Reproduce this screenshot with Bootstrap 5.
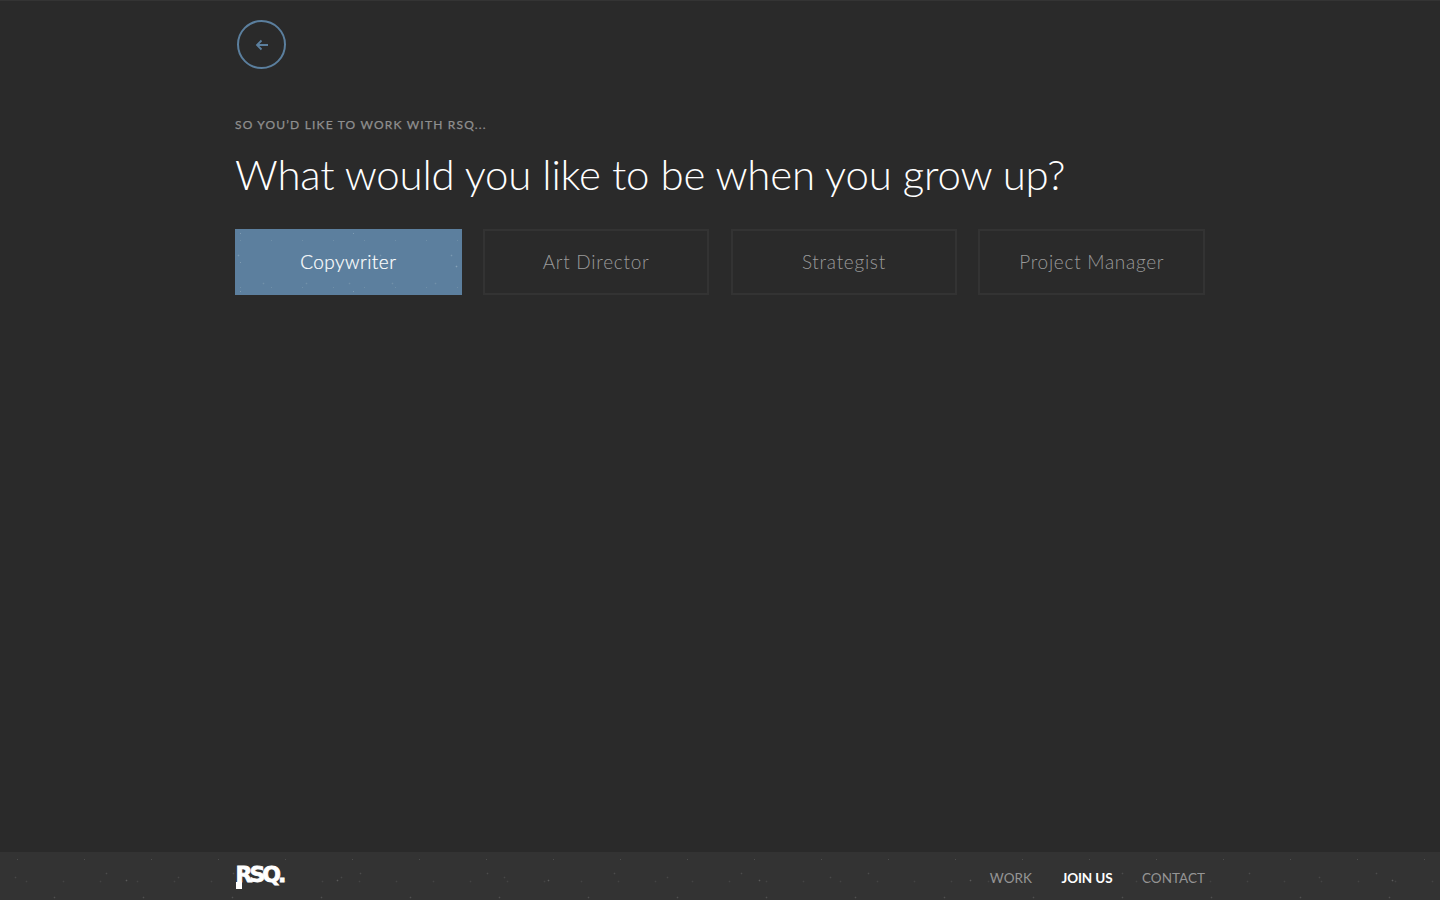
<!DOCTYPE html>
<html lang="en">
<head>
<meta charset="utf-8">
<title>RSQ</title>
<link href="https://cdn.jsdelivr.net/npm/bootstrap@5.3.0/dist/css/bootstrap.min.css" rel="stylesheet">
<style>
html,body{height:100%}
body{background:#2a2a2a;font-family:"Lato","Liberation Sans",sans-serif;color:#fff;border-top:1px solid #343434}
.page-shell{min-height:calc(100vh - 1px)}
.page-wrap{width:970px;margin:0 auto}
.back-ring{width:49px;height:49px;margin-top:19px;margin-left:2px;border:2px solid #5b7f9e;border-radius:50%}
.eyebrow{margin-top:47px;font-size:12px;line-height:18px;font-weight:400;letter-spacing:1.19px;color:#8f8f8f;-webkit-text-stroke:.25px #8f8f8f}
.headline{margin:10px 0 0;font-size:42px;line-height:60px;font-weight:300;letter-spacing:-.2px;color:#fff}
.role-grid{display:grid;grid-template-columns:repeat(4,1fr);column-gap:21.33px;margin-top:25px}
.role-btn{height:66px;border:2px solid #333;border-radius:0;background:transparent;color:#9a9a9a;font-size:19px;font-weight:300;letter-spacing:.72px;padding:0}
.role-btn:hover{color:#9a9a9a;border-color:#333}
.role-active,.role-active:hover{color:#fff;letter-spacing:.45px;-webkit-text-stroke:.2px #fff;border-color:#5c7f9e;background-color:#5c7f9e;
background-image:radial-gradient(circle,#86a2b8 .7px,transparent 1.1px),radial-gradient(circle,#7a98b0 .7px,transparent 1.1px),radial-gradient(circle,#7190a9 .7px,transparent 1.1px),radial-gradient(circle,#7e9bb2 .6px,transparent 1px),radial-gradient(circle,#6f8fa8 .6px,transparent 1px);background-size:137px 53px,71px 41px,43px 61px,113px 29px,31px 47px;background-position:14px 9px,37px 4px,5px 22px,60px 17px,19px 33px}
.site-foot{height:48px;background-color:#333;
background-image:radial-gradient(circle,#5a5a5a .7px,transparent 1.1px),radial-gradient(circle,#4c4c4c .7px,transparent 1.1px),radial-gradient(circle,#505050 .7px,transparent 1.1px),radial-gradient(circle,#484848 .7px,transparent 1.1px),radial-gradient(circle,#4e4e4e .6px,transparent 1px),radial-gradient(circle,#444 .7px,transparent 1.1px);background-size:211px 43px,127px 37px,89px 53px,163px 29px,67px 47px,37px 31px;background-position:21px 7px,43px 3px,10px 19px,97px 11px,51px 31px,8px 14px}
.foot-logo{position:relative;font-family:"DejaVu Sans","Liberation Sans",sans-serif;font-weight:700;font-size:22px;letter-spacing:-3px;line-height:48px;color:#fff;-webkit-text-stroke:.8px #fff;margin-top:-2px;margin-left:.5px}
.logo-stem{position:absolute;left:0;top:31px;width:6px;height:7px;background:#fff}
.foot-link{font-size:13.5px;font-weight:400;color:#959595;text-decoration:none;line-height:18px;letter-spacing:.03px}
.foot-link.is-current{color:#fff;font-weight:700;letter-spacing:-.12px}
.foot-nav{gap:29.5px;padding-top:4px}
</style>
</head>
<body>
<div class="page-shell d-flex flex-column">
  <main class="flex-grow-1">
    <div class="page-wrap">
      <a href="#" class="back-ring d-flex align-items-center justify-content-center" aria-label="Back">
        <svg width="14" height="12" viewBox="0 0 14 12" fill="none" stroke="#5b7f9e" stroke-width="1.8"><path d="M13 6H2M6.500 1.500 2 6l4.500 4.500"/></svg>
      </a>
      <div class="eyebrow">SO YOU’D LIKE TO WORK WITH RSQ...</div>
      <h1 class="headline">What would you like to be when you grow up?</h1>
      <div class="role-grid">
        <button class="btn role-btn role-active">Copywriter</button>
        <button class="btn role-btn">Art Director</button>
        <button class="btn role-btn">Strategist</button>
        <button class="btn role-btn">Project Manager</button>
      </div>
    </div>
  </main>
  <footer class="site-foot">
    <div class="page-wrap d-flex justify-content-between align-items-center h-100">
      <div class="foot-logo">RSQ.<span class="logo-stem"></span></div>
      <nav class="foot-nav d-flex align-items-center">
        <a class="foot-link" href="#">WORK</a>
        <a class="foot-link is-current" href="#">JOIN US</a>
        <a class="foot-link" href="#">CONTACT</a>
      </nav>
    </div>
  </footer>
</div>
</body>
</html>
